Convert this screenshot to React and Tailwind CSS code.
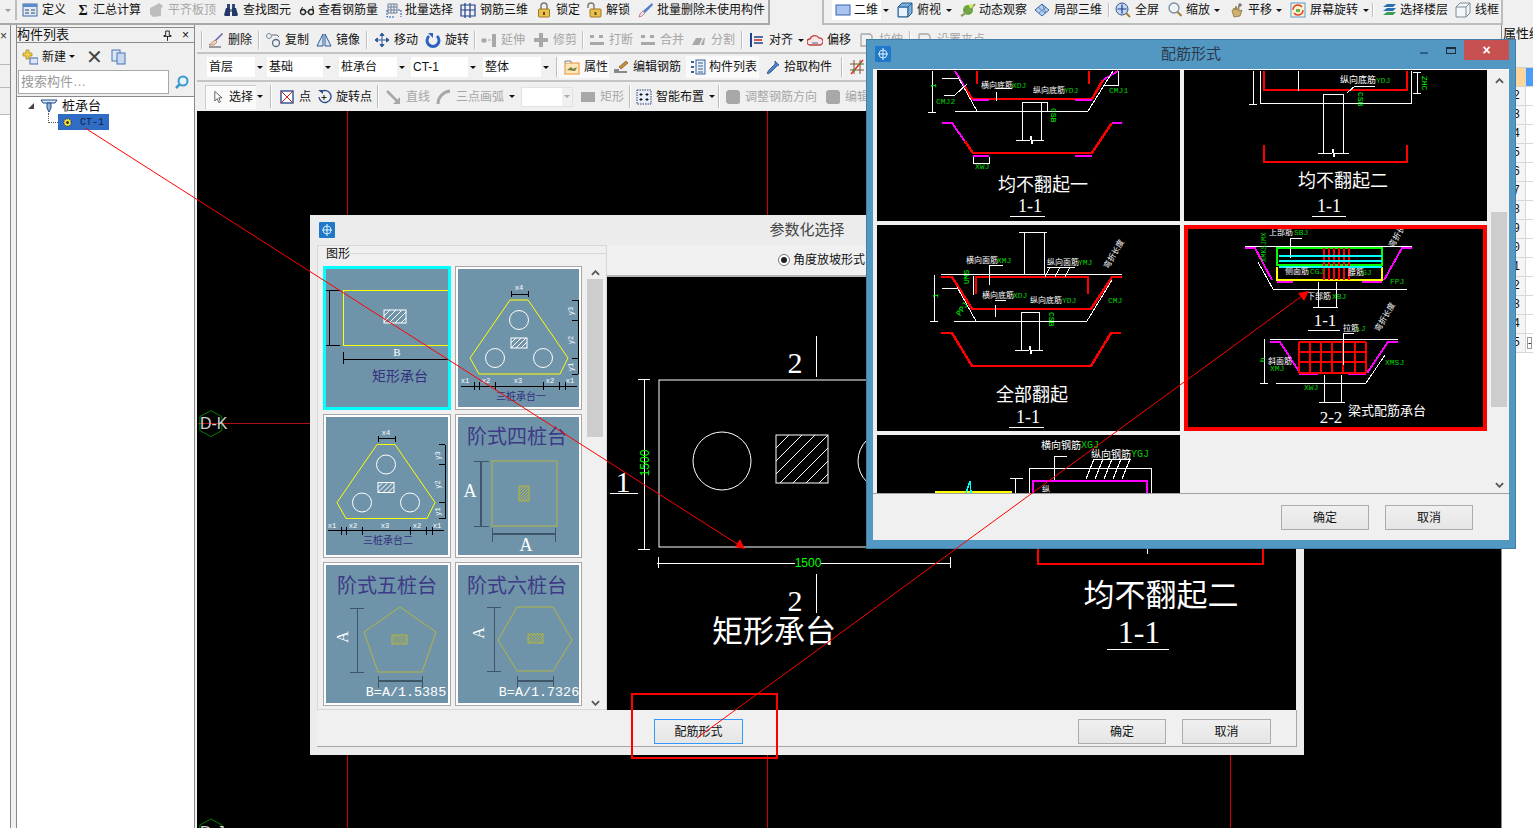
import React from "react";

// small 16px toolbar glyphs
const S = ({ children }) => (
  <svg viewBox="0 0 16 16" className="w-4 h-4 shrink-0">
    {children}
  </svg>
);

const icons = {
  define: (
    <S>
      <rect x="1" y="2" width="14" height="12" fill="#dfe9f7" stroke="#3d6aa8" />
      <rect x="1" y="2" width="14" height="3" fill="#5b8bc9" />
      <path d="M3 8h4M3 11h4M9 8h4M9 11h4" stroke="#345" />
    </S>
  ),
  greyBlob: (
    <S>
      <path d="M2 6l6-3 3-2 4 3-2 3v7l-8 1-3-3z" fill="#bdbdbd" />
    </S>
  ),
  binoculars: (
    <S>
      <path d="M4 2h3v5H4zM9 2h3v5H9z" fill="#2f4a80" />
      <path d="M1 13l2-7h4v8H2zM15 13l-2-7H9v8h5z" fill="#24386a" />
      <path d="M7 7h2v3H7z" fill="#789" />
    </S>
  ),
  glasses: (
    <S>
      <circle cx="4" cy="10" r="2.5" fill="none" stroke="#222" strokeWidth="1.3" />
      <circle cx="12" cy="10" r="2.5" fill="none" stroke="#222" strokeWidth="1.3" />
      <path d="M6.5 10h3M1.5 9l2-4M14.5 9l-1-5" stroke="#222" />
    </S>
  ),
  batch: (
    <S>
      <path d="M2 2h9v9H2zM2 5h9M2 8h9M5 2v9M8 2v9" fill="none" stroke="#6f7f99" />
      <path d="M1 8v7h8M12 8h3v7" fill="none" stroke="#1f54c0" strokeDasharray="2 1" />
    </S>
  ),
  rebar3d: (
    <S>
      <path d="M1 3h14v11H1zM5 1v15M10 1v15M1 8h14" fill="none" stroke="#1d3f8c" strokeWidth="1.2" />
    </S>
  ),
  lock: (
    <S>
      <path d="M5 7V4a3 3 0 016 0v3" fill="none" stroke="#777" strokeWidth="1.4" />
      <rect x="2.5" y="7" width="11" height="8" rx="1" fill="#e8c050" stroke="#a07820" />
      <rect x="7" y="10" width="2" height="3" fill="#6b4a10" />
    </S>
  ),
  unlock: (
    <S>
      <path d="M2 6V4a3 3 0 016 0v3" fill="none" stroke="#777" strokeWidth="1.4" />
      <rect x="4" y="7" width="11" height="8" rx="1" fill="#e8c050" stroke="#a07820" />
      <rect x="8.5" y="10" width="2" height="3" fill="#6b4a10" />
    </S>
  ),
  brush: (
    <S>
      <path d="M14 1l1 2-8 8-2-2z" fill="#4d7fd0" />
      <path d="M5 9l2 2-3 3-3 1 1-3z" fill="#e6e6f5" stroke="#c05050" strokeWidth=".7" />
    </S>
  ),
  view2d: (
    <S>
      <rect x="1" y="3" width="14" height="10" fill="#a9c4ee" stroke="#3564b0" />
    </S>
  ),
  cube: (
    <S>
      <path d="M1 5l4-4h10v10l-4 4H1z" fill="#7fb0dc" stroke="#245a8c" />
      <path d="M1 5h10v10M11 5l4-4" fill="none" stroke="#245a8c" />
      <rect x="2" y="6" width="8" height="8" fill="#e9f2fa" />
    </S>
  ),
  orbit: (
    <S>
      <circle cx="8" cy="8" r="5" fill="#66a83c" />
      <path d="M1 14C5 12 12 6 15 2" stroke="#8a9a60" strokeWidth="2" fill="none" />
      <circle cx="11" cy="4" r="2" fill="#d5e860" />
    </S>
  ),
  local3d: (
    <S>
      <path d="M1 8l7-6 7 6-7 6z" fill="#b8cfee" stroke="#3a68a8" />
      <path d="M4 5l7 6M8 2l4 9M12 5l-7 6" stroke="#3a68a8" strokeWidth=".7" />
    </S>
  ),
  full: (
    <S>
      <circle cx="7" cy="7" r="6" fill="#c6d8f4" stroke="#34548c" />
      <path d="M7 2.5v9M2.5 7h9" stroke="#1b3f8a" strokeWidth="1.2" />
      <path d="M11 11l4 4" stroke="#a08030" strokeWidth="2" />
    </S>
  ),
  zoom: (
    <S>
      <circle cx="7" cy="6" r="5" fill="#eef3f8" stroke="#7d8da0" strokeWidth="1.3" />
      <path d="M10.5 10l4 4" stroke="#a08030" strokeWidth="2" />
    </S>
  ),
  hand: (
    <S>
      <path d="M3 9l2-3 1 2 1-4 1 4 2-4v5l3-1-2 6-6 1z" fill="#d0b070" stroke="#7c6530" strokeWidth=".7" />
      <path d="M11 1v4M9 3h4" stroke="#555" />
    </S>
  ),
  screenRotate: (
    <S>
      <rect x="1" y="1" width="14" height="14" fill="#fbf3d0" stroke="#5a9ad0" />
      <path d="M3 8a5 5 0 019-3M13 8a5 5 0 01-9 3" fill="none" stroke="#e0402a" strokeWidth="1.4" />
      <rect x="6" y="7" width="4" height="3" fill="#70b050" />
    </S>
  ),
  layers: (
    <S>
      <path d="M2 5l4-3h9l-3 3zM2 9l4-3h9l-3 3z" fill="#2a70b0" />
      <path d="M2 13l4-3h9l-3 3z" fill="#3e9a50" />
    </S>
  ),
  wire: (
    <S>
      <path d="M1 5l4-4h10v10l-4 4H1zM1 5h10v10M11 5l4-4" fill="#f4f6f8" stroke="#7d8a96" />
    </S>
  ),
  erase: (
    <S>
      <path d="M14 1l1 1-7 7-1-1z" fill="#6b58a8" />
      <path d="M7 8l2 2-3 3H1z" fill="#f2d6c0" stroke="#a05040" strokeWidth=".6" />
      <path d="M1 15h12" stroke="#444" />
    </S>
  ),
  copy: (
    <S>
      <circle cx="4" cy="4" r="2.5" fill="none" stroke="#7a8ca0" />
      <circle cx="11" cy="11" r="3.5" fill="none" stroke="#5a6a80" strokeWidth="1.3" />
      <path d="M7 3h5l2 2" fill="none" stroke="#5a6a80" />
    </S>
  ),
  mirror: (
    <S>
      <path d="M7 2v12H1zM9 2v12h6z" fill="#dbe6f4" stroke="#2d5a98" />
    </S>
  ),
  move: (
    <S>
      <path d="M8 1v14M1 8h14M8 1L6 3.5h4zM8 15l-2-2.5h4zM1 8l2.5-2v4zM15 8l-2.5-2v4z" fill="#2d5a98" stroke="#2d5a98" />
    </S>
  ),
  rotate: (
    <S>
      <path d="M4 4a6 6 0 108 0" fill="none" stroke="#2d62c0" strokeWidth="3" />
      <path d="M3 1h5v5z" fill="#2d62c0" />
    </S>
  ),
  extend: (
    <S>
      <path d="M1 7h4v3H1zM7 8h3" stroke="#a8a8a8" fill="#a8a8a8" />
      <rect x="11" y="2" width="4" height="13" fill="#a8a8a8" />
    </S>
  ),
  trim: (
    <S>
      <path d="M6 1h4v5h5v4h-5v5H6v-5H1V6h5z" fill="#a8a8a8" />
    </S>
  ),
  split: (
    <S>
      <path d="M1 3h4v3H1zM10 3h4v3h-4zM1 10h14v3H1z" fill="#a8a8a8" />
    </S>
  ),
  cut: (
    <S>
      <path d="M1 13l4-7h9l-1 7z" fill="#a8a8a8" />
      <path d="M9 13l5-11" stroke="#f0f0f0" strokeWidth="1.5" />
    </S>
  ),
  align: (
    <S>
      <path d="M2 1v14" stroke="#1d3f8c" strokeWidth="2" />
      <path d="M5 5h9M5 11h9" stroke="#1d3f8c" strokeWidth="1.5" />
      <path d="M5 8h8" stroke="#d02020" strokeWidth="1.5" />
    </S>
  ),
  offset: (
    <S>
      <path d="M3 13a3 3 0 010-6 5 5 0 019-1 3.500 3.500 0 011 7z" fill="#f8e6e6" stroke="#c04040" strokeWidth="1.3" />
      <path d="M5 11h6" stroke="#4060a0" />
    </S>
  ),
  stretch: (
    <S>
      <path d="M2 2h9l2 2v3M2 2v12h5" fill="none" stroke="#a8a8a8" strokeWidth="1.3" />
    </S>
  ),
  prop: (
    <S>
      <rect x="1" y="4" width="14" height="11" fill="#fde6b8" stroke="#e89030" />
      <path d="M1 4V2h6v2" fill="#e9e9e9" stroke="#888" />
      <path d="M3 11l4-3 2 2 4-2-2 4z" fill="#708040" />
    </S>
  ),
  pencil: (
    <S>
      <path d="M13 2l2 2-7 6-2-2z" fill="#c89038" stroke="#704010" strokeWidth=".6" />
      <path d="M1 11h5M1 13h13" stroke="#222" />
    </S>
  ),
  list: (
    <S>
      <rect x="6" y="1" width="9" height="14" fill="#e8eef8" stroke="#3a6098" />
      <path d="M8 4h5M8 7h5M8 10h5M8 13h5" stroke="#3a6098" />
      <path d="M1 2h3v2H1zM1 7h3v2H1zM1 12h3v2H1z" fill="#3a6098" />
    </S>
  ),
  dropper: (
    <S>
      <path d="M10 2l4 4-2 1-6 6-3 2-1-1 2-3 6-6z" fill="#4e82c8" stroke="#20487c" strokeWidth=".7" />
    </S>
  ),
  snap: (
    <S>
      <path d="M1 5h14M1 11h14M5 1v14M11 1v14" stroke="#805030" />
      <path d="M2 15L14 1" stroke="#e02020" strokeWidth="1.3" />
      <circle cx="5" cy="11" r="1.2" fill="#30a030" />
      <circle cx="11" cy="5" r="1.2" fill="#30a030" />
    </S>
  ),
  point: (
    <S>
      <rect x="2" y="2" width="12" height="12" fill="#fff" stroke="#1d3f8c" strokeWidth="1.3" />
      <path d="M2 2l12 12M14 2L2 14" stroke="#d02020" />
    </S>
  ),
  rotatePoint: (
    <S>
      <path d="M5 3a6 6 0 11-2 5" fill="none" stroke="#2d4f8c" strokeWidth="1.4" />
      <path d="M2 1h5v4z" fill="#2d4f8c" />
      <path d="M8 6v5M5.500 8.500h5" stroke="#222" />
    </S>
  ),
  line: (
    <S>
      <path d="M1 2l11 11" stroke="#a8a8a8" strokeWidth="2.5" />
      <path d="M14 8v7H7z" fill="#a8a8a8" />
    </S>
  ),
  arc: (
    <S>
      <path d="M2 15C2 8 7 3 14 2" fill="none" stroke="#a8a8a8" strokeWidth="3" />
    </S>
  ),
  greyRect: (
    <S>
      <rect x="1" y="3" width="14" height="10" fill="#a8a8a8" />
    </S>
  ),
  smart: (
    <S>
      <rect x="1" y="1" width="14" height="14" fill="#e8eef8" stroke="#2a3f6c" strokeDasharray="1.500 1" />
      <path d="M5 4v3M3.500 5.500h3M11 4v3M9.500 5.500h3M5 9v3M3.500 10.500h3M11 9v3M9.500 10.500h3" stroke="#111" />
    </S>
  ),
  greySquare: (
    <S>
      <path d="M3 1h10l2 2v11l-2 1H3l-2-2V3z" fill="#a8a8a8" />
    </S>
  ),
};

const Arrow = ({ ml = "ml-[1px]" }) => <span className={`${ml} w-0 h-0 border-x-[3px] border-x-transparent border-t-[3px] border-t-[#111]`} />;

const Tool = ({ w, icon, label, grey, arrow, gap = "gap-1" }) => (
  <div className={`${w} h-full flex items-center shrink-0 whitespace-nowrap ${gap} ${grey ? "text-[#a6a6a6]" : "text-[#111]"}`}>
    {icon}
    <span>{label}</span>
    {arrow && <Arrow />}
  </div>
);

const Sep = ({ w }) => (
  <div className={`${w} h-full py-[3px] shrink-0`}>
    <div className="w-[2px] h-full bg-[#bdbdbd] border-r border-white" />
  </div>
);

const Combo = ({ w, text, mono, outline }) => (
  <div className={`${w} h-[20px] shrink-0 flex items-center justify-between bg-white ${outline ? "border border-[#e2e2e2]" : ""}`}>
    <span className={`pl-[2px] ${mono ? "font-['Liberation_Mono',monospace]" : ""}`}>{text}</span>
    <span className="w-[10px] h-full flex items-center justify-center bg-[#f0f0f0]">
      <span className={`w-0 h-0 border-x-[3px] border-x-transparent border-t-[3px] ${outline ? "border-t-[#aaa]" : "border-t-[#111]"}`} />
    </span>
  </div>
);

const TopBar = () => (
  <div className="h-[25px] flex shrink-0 text-[12px]">
    <div className="w-[770px] h-[25px] pb-[3px] flex border-r-2 border-b-2 border-[#a8a8a8] shrink-0">
      <div className="w-[15px] flex items-center justify-center">
        <span className="w-0 h-0 border-x-[3px] border-x-transparent border-t-[3px] border-t-[#999]" />
      </div>
      <div className="w-[7px] h-full border-l-2 border-[#bdbdbd]" />
      <Tool w="w-[53px]" icon={icons.define} label="定义" />
      <Tool w="w-[73px]" gap="gap-[2px]" icon={<span className="w-4 text-center font-bold text-[14px] font-['Liberation_Serif',serif]">Σ</span>} label="汇总计算" />
      <Tool w="w-[75px]" icon={icons.greyBlob} label="平齐板顶" grey />
      <Tool w="w-[76px]" icon={icons.binoculars} label="查找图元" />
      <Tool w="w-[87px]" gap="gap-[3px]" icon={icons.glasses} label="查看钢筋量" />
      <Tool w="w-[74px]" gap="gap-[3px]" icon={icons.batch} label="批量选择" />
      <Tool w="w-[76px]" icon={icons.rebar3d} label="钢筋三维" />
      <Tool w="w-[50px]" icon={icons.lock} label="锁定" />
      <Tool w="w-[52px]" icon={icons.unlock} label="解锁" />
      <Tool w="w-[130px]" gap="gap-[3px]" icon={icons.brush} label="批量删除未使用构件" />
    </div>
    <div className="w-[52px] shrink-0" />
    <div className="w-[681px] h-[25px] pb-[3px] flex border-l-2 border-r-2 border-b-2 border-[#bdbdbd] shrink-0">
      <div className="w-[8px] shrink-0" />
      <div className="w-[65px] h-full shrink-0">
        <div className="w-[59px] h-[20px] flex items-center justify-between bg-white pl-[3px]">
          <span className="flex items-center gap-[3px]">
            {icons.view2d}
            二维
          </span>
          <span className="w-[10px] h-full flex items-center justify-center bg-[#f0f0f0]">
            <span className="w-0 h-0 border-x-[3px] border-x-transparent border-t-[3px] border-t-[#111]" />
          </span>
        </div>
      </div>
      <Tool w="w-[63px]" icon={icons.cube} label="俯视" arrow />
      <Tool w="w-[74px]" gap="gap-[3px]" icon={icons.orbit} label="动态观察" />
      <Tool w="w-[74px]" icon={icons.local3d} label="局部三维" />
      <Sep w="w-[7px]" />
      <Tool w="w-[52px]" icon={icons.full} label="全屏" />
      <Tool w="w-[62px]" gap="gap-[3px]" icon={icons.zoom} label="缩放" arrow />
      <Tool w="w-[61px]" gap="gap-[3px]" icon={icons.hand} label="平移" arrow />
      <Tool w="w-[82px]" icon={icons.screenRotate} label="屏幕旋转" arrow />
      <Sep w="w-[9px]" />
      <Tool w="w-[74px]" gap="gap-[3px]" icon={icons.layers} label="选择楼层" />
      <Tool w="w-[46px]" icon={icons.wire} label="线框" />
    </div>
  </div>
);

const LeftStrip = () => (
  <div className="w-[17px] shrink-0 flex">
    <div className="w-[11px] flex flex-col border-r border-[#8a8a8a]">
      <div className="h-[17px] mt-[2px] flex items-center text-[12px] text-[#333]">×</div>
      <div className="h-[21px] border-b border-[#bbb]" />
      <div className="h-[23px] border-b border-[#bbb]" />
      <div className="h-[27px] border-b border-[#bbb]" />
      <div className="flex-1 bg-white" />
    </div>
    <div className="w-[6px] border-r border-[#8a8a8a] bg-[#f0f0f0]" />
  </div>
);

const LeftPanel = () => (
  <div className="w-[178px] shrink-0 flex flex-col border-r border-[#8a8a8a] text-[12px]">
    <div className="h-[16px] mt-[2px] flex items-center justify-between border-t border-b border-[#8a8a8a] pr-[5px]">
      <span className="text-[13px]">构件列表</span>
      <span className="flex items-center gap-[10px]">
        <svg viewBox="0 0 10 12" className="w-[9px] h-[11px]">
          <path d="M3 1h4v5h2v1H1V6h2zM5 7v5" fill="none" stroke="#111" />
        </svg>
        <span>×</span>
      </span>
    </div>
    <div className="h-[27px] flex items-center pl-[5px]">
      <svg viewBox="0 0 16 16" className="w-4 h-4">
        <path d="M4 1h3v3h3v3H7v3H4V7H1V4h3z" fill="#f0d040" stroke="#a08020" strokeWidth=".7" />
        <rect x="8" y="9" width="8" height="6" fill="#dde6f4" stroke="#4468a8" />
      </svg>
      <span className="ml-1">新建</span>
      <Arrow ml="ml-[3px]" />
      <span className="ml-[11px] text-[20px] leading-none text-[#444]">✕</span>
      <svg viewBox="0 0 16 16" className="w-4 h-4 ml-[8px]">
        <rect x="1" y="1" width="8" height="11" fill="#dde6f4" stroke="#4a72b8" />
        <rect x="6" y="4" width="8" height="11" fill="#c8d8f0" stroke="#4a72b8" />
      </svg>
    </div>
    <div className="h-[24px] flex">
      <div className="w-[151px] ml-[1px] border border-[#a8a8a8] bg-white text-[#999] flex items-center pl-[2px] text-[13px]">搜索构件…</div>
      <div className="flex-1 flex items-center justify-center">
        <svg viewBox="0 0 16 16" className="w-4 h-4">
          <circle cx="9" cy="7" r="4.500" fill="#e8f4fc" stroke="#3a9ad0" strokeWidth="2" />
          <path d="M6 10l-4 4" stroke="#3a9ad0" strokeWidth="2.500" />
        </svg>
      </div>
    </div>
    <div className="flex-1 bg-white mt-[2px] border-t border-[#8a8a8a]">
      <div className="h-[17px] flex items-center">
        <span className="ml-[11px] w-0 h-0 border-l-[6px] border-l-transparent border-b-[6px] border-b-[#444]" />
        <svg viewBox="0 0 18 16" className="w-[18px] h-4 ml-[6px]">
          <path d="M1 2h16l-2 3H3z" fill="#dde6f4" stroke="#1d4a90" />
          <path d="M7 5h4v5l-2 4-2-4z" fill="#9ab4d8" stroke="#1d4a90" />
        </svg>
        <span className="ml-[4px] text-[13px]">桩承台</span>
      </div>
      <div className="h-[16px] flex items-center">
        <div className="ml-[31px] w-[10px] h-[10px] -mt-[8px] border-l border-b border-dotted border-[#555]" />
        <div className="w-[51px] h-full bg-[#2f6cc4] flex items-center pl-[4px]">
          <svg viewBox="0 0 12 12" className="w-[11px] h-[11px]">
            <circle cx="6" cy="6" r="4" fill="#f0e040" stroke="#222" strokeDasharray="1.500 1" />
            <circle cx="6" cy="6" r="1.500" fill="#222" />
          </svg>
          <span className="ml-[7px] font-['Liberation_Mono',monospace] text-[10px] text-[#10204a]">CT-1</span>
        </div>
      </div>
    </div>
  </div>
);

const EditBars = () => (
  <div className="shrink-0 text-[12px]">
    <div className="h-[29px] pt-[3px] flex pl-[4px] border-b-2 border-[#c4c4c4]">
      <Sep w="w-[7px]" />
      <Tool w="w-[50px]" icon={icons.erase} label="删除" />
      <Sep w="w-[7px]" />
      <Tool w="w-[51px]" icon={icons.copy} label="复制" />
      <Tool w="w-[50px]" icon={icons.mirror} label="镜像" />
      <Sep w="w-[8px]" />
      <Tool w="w-[51px]" icon={icons.move} label="移动" />
      <Tool w="w-[49px]" icon={icons.rotate} label="旋转" />
      <Sep w="w-[7px]" />
      <Tool w="w-[52px]" icon={icons.extend} label="延伸" grey />
      <Tool w="w-[49px]" icon={icons.trim} label="修剪" grey />
      <Sep w="w-[7px]" />
      <Tool w="w-[51px]" icon={icons.split} label="打断" grey />
      <Tool w="w-[51px]" icon={icons.split} label="合并" grey />
      <Tool w="w-[50px]" icon={icons.cut} label="分割" grey />
      <Sep w="w-[8px]" />
      <Tool w="w-[58px]" icon={icons.align} label="对齐" arrow />
      <Tool w="w-[52px]" icon={icons.offset} label="偏移" />
      <Tool w="w-[50px]" icon={icons.stretch} label="拉伸" grey />
      <Sep w="w-[8px]" />
      <Tool w="w-[90px]" icon={icons.stretch} label="设置夹点" grey />
    </div>
    <div className="h-[28px] flex items-center pl-[10px] border-b-2 border-[#c4c4c4]">
      <Combo w="w-[58px]" text="首层" />
      <div className="w-[2px] shrink-0" />
      <Combo w="w-[66px]" text="基础" />
      <div className="w-[6px] shrink-0" />
      <Combo w="w-[68px]" text="桩承台" />
      <div className="w-[4px] shrink-0" />
      <Combo w="w-[67px]" text="CT-1" />
      <div className="w-[5px] shrink-0" />
      <Combo w="w-[68px]" text="整体" />
      <div className="w-[5px] shrink-0" />
      <Sep w="w-[3px]" />
      <div className="w-[50px] h-[22px] flex items-center gap-1 pl-[5px] bg-[#fafafa] shrink-0 whitespace-nowrap">
        {icons.prop}
        属性
      </div>
      <div className="w-[4px] shrink-0" />
      <Tool w="w-[73px]" icon={icons.pencil} label="编辑钢筋" />
      <div className="w-[73px] h-[22px] flex items-center gap-[3px] pl-[4px] bg-[#fafafa] shrink-0 whitespace-nowrap">
        {icons.list}
        构件列表
      </div>
      <div className="w-[6px] shrink-0" />
      <Tool w="w-[76px]" gap="gap-[3px]" icon={icons.dropper} label="拾取构件" />
      <Sep w="w-[8px]" />
      {icons.snap}
    </div>
    <div className="h-[29px] flex items-center pl-[8px]">
      <div className="w-[51px] h-[24px] flex items-center pl-[8px] gap-[7px] bg-[#fafafa] border-l border-t border-[#ccc] shrink-0 whitespace-nowrap">
        <svg viewBox="0 0 10 16" className="w-[8px] h-[14px]">
          <path d="M1 1v12l3-3 2 5 2-1-2-5h4z" fill="#fff" stroke="#444" />
        </svg>
        选择
      </div>
      <div className="w-[14px] h-full shrink-0 flex items-center">
        <Arrow ml="ml-[1px]" />
      </div>
      <Sep w="w-[9px]" />
      <Tool w="w-[37px]" icon={icons.point} label="点" />
      <Tool w="w-[61px]" icon={icons.rotatePoint} label="旋转点" />
      <Sep w="w-[9px]" />
      <Tool w="w-[50px]" icon={icons.line} label="直线" grey />
      <Tool w="w-[85px]" icon={icons.arc} label="三点画弧" grey arrow />
      <Combo w="w-[52px]" text="" outline />
      <div className="w-[7px] shrink-0" />
      <Tool w="w-[49px]" icon={icons.greyRect} label="矩形" grey />
      <Sep w="w-[7px]" />
      <Tool w="w-[82px]" icon={icons.smart} label="智能布置" arrow />
      <Sep w="w-[7px]" />
      <Tool w="w-[100px]" icon={icons.greySquare} label="调整钢筋方向" grey />
      <Tool w="w-[60px]" icon={icons.greySquare} label="编辑" grey />
    </div>
  </div>
);

// --- drawing helpers, authored in page coordinates through the viewBox ---
const L = ({ p, c = "#fff", w = 1 }) => <polyline points={p} fill="none" stroke={c} strokeWidth={w} shapeRendering="crispEdges" />;
const T = ({ x, y, s = 9, c = "#fff", a = "start", r, children, mono, serif }) => (
  <text
    x={x}
    y={y}
    fontSize={s}
    fill={c}
    textAnchor={a}
    dominantBaseline="central"
    fontFamily={mono ? "Liberation Mono, monospace" : serif ? "Liberation Serif, serif" : undefined}
    transform={r !== undefined ? `rotate(${r} ${x} ${y})` : undefined}
  >
    {children}
  </text>
);
const Leader = ({ x, y, name, code, w = 31, s = 8 }) => (
  <>
    <T x={x} y={y} s={s}>{name}</T>
    <T x={x + w} y={y} s={s} c="#00d000" mono>{code}</T>
  </>
);
const RED = "#ff0000";
const MAG = "#ff00ff";
const GRN = "#00ff00";

const hatch = (x1, y1, x2, y2, step, c = "#fff") => {
  const out = [];
  for (let x = x1 + step; x < x2 + (y2 - y1); x += step) {
    const sx = Math.min(x, x2);
    const sy = x > x2 ? y1 + (x - x2) : y1;
    const ex = Math.max(x - (y2 - y1), x1);
    const ey = x - (y2 - y1) < x1 ? y1 + (x - x1) : y2;
    out.push(<line key={x} x1={sx} y1={sy} x2={ex} y2={ey} stroke={c} strokeWidth="1" />);
  }
  return out;
};

const Cell1 = () => (
  <svg viewBox="877 70 303 151" className="w-[303px] h-[151px] block">
    <L p="955,71 972,99" c={MAG} w={2} />
    <L p="965,87 972,99 1092,99 1103,80" c={RED} w={2.5} />
    <L p="1103,80 1118,71" c={MAG} w={2} />
    <L p="977,71 977,84" c={RED} w={2} />
    <L p="1089,71 1089,84" c={RED} w={2} />
    <L p="973,100 989,100" c={MAG} w={2} />
    <L p="1075,100 1092,100" c={MAG} w={2} />
    <L p="955,111 1088,111 1113,71" />
    <L p="958,77 977,111" />
    <L p="932,71 932,112" />
    <L p="928,112 936,112" />
    <L p="942,78 958,78" />
    <L p="944,95 955,95 967,84" />
    <L p="1022,140 1022,102 1041,102 1041,140" />
    <L p="1016,140 1030,140 1031,136 1032,144 1033,140 1044,140" />
    <L p="996,92 996,101" />
    <L p="996,88 1012,88" />
    <L p="1040,102 1047,102 1047,111" />
    <L p="1104,85 1118,85 1118,71" />
    <T x={933} y={88} c={GRN} s={8} r={-90}>1</T>
    <Leader x={981} y={85} name="横向底筋" code="XDJ" />
    <Leader x={1033} y={90} name="纵向底筋" code="YDJ" />
    <T x={936} y={101} s={8} c="#00d000" mono>CMJ2</T>
    <T x={1109} y={90} s={8} c="#00d000" mono>CMJ1</T>
    <T x={1053} y={108} c={GRN} s={8} r={90} mono>CSB</T>
    <L p="942,123 952,123 973,153" c={MAG} w={2} />
    <L p="965,141 973,153 1092,153 1112,123" c={RED} w={2.5} />
    <L p="1112,123 1122,123" c={MAG} w={2} />
    <L p="973,156 989,156" c={MAG} w={2} />
    <L p="1075,156 1092,156" c={MAG} w={2} />
    <L p="973,157 973,163 989,163 989,157" />
    <T x={975} y={166} s={8} c="#00d000" mono>XWJ</T>
    <T x={1043} y={185} s={18} a="middle">均不翻起一</T>
    <T x={1030} y={206} s={18} a="middle" serif>1-1</T>
    <L p="1010,216 1045,216" />
  </svg>
);

const Cell2 = () => (
  <svg viewBox="1184 70 303 151" className="w-[303px] h-[151px] block">
    <L p="1264,71 1264,90 1407,90 1407,71" c={RED} w={2.5} />
    <L p="1260,71 1260,103 1411,103 1411,71" />
    <L p="1298,71 1298,91" />
    <L p="1323,153 1323,94 1343,94 1343,153" />
    <L p="1318,153 1332,153 1333,149 1334,157 1335,153 1349,153" />
    <L p="1253,71 1253,104" />
    <L p="1249,104 1257,104" />
    <L p="1417,72 1417,93" />
    <L p="1413,72 1421,72" />
    <L p="1413,93 1421,93" />
    <T x={1340} y={80} s={9}>纵向底筋</T>
    <T x={1376} y={80} s={8} c="#00d000" mono>YDJ</T>
    <L p="1347,93 1355,86 1375,86" />
    <T x={1424} y={76} c={GRN} s={8} r={90} mono>ZHC</T>
    <T x={1360} y={92} c={GRN} s={8} r={90} mono>CSB</T>
    <L p="1264,145 1264,162 1407,162 1407,145" c={RED} w={2} />
    <T x={1343} y={181} s={18} a="middle">均不翻起二</T>
    <T x={1329} y={206} s={18} a="middle" serif>1-1</T>
    <L p="1312,216 1346,216" />
  </svg>
);

const Cell3 = () => (
  <svg viewBox="877 225 303 206" className="w-[303px] h-[206px] block">
    <L p="1024,232 1024,274" />
    <L p="1044,232 1044,274" />
    <L p="1019,232 1047,232" />
    <L p="941,274 1122,274" />
    <L p="941,277 952,277 972,309 1091,309 1112,277 1122,277" c={RED} w={2.5} />
    <L p="976,294 976,277 1088,277 1088,294" c={RED} w={2.5} />
    <L p="954,321 1087,321 1112,280" />
    <L p="957,287 976,321" />
    <L p="1021,350 1021,312 1039,312 1039,350" />
    <L p="1015,350 1029,350 1030,346 1031,354 1032,350 1043,350" />
    <L p="941,333 952,333 972,366 1091,366 1111,333 1121,333" c={RED} w={2.5} />
    <L p="934,275 934,321" />
    <L p="930,321 938,321" />
    <L p="942,288 957,288" />
    <L p="973,276 973,295" />
    <L p="989,265 989,285" />
    <L p="989,265 1003,265" />
    <L p="995,305 995,317" />
    <L p="995,300 1006,300" />
    <T x={935} y={298} c={GRN} s={8} r={-90}>1</T>
    <Leader x={966} y={260} name="横向面筋" code="XMJ" />
    <Leader x={1047} y={262} name="纵向面筋" code="YMJ" />
    <Leader x={982} y={295} name="横向底筋" code="XDJ" />
    <Leader x={1030} y={300} name="纵向底筋" code="YDJ" w={32} />
    <L p="1047,267 1075,267" />
    <L p="1045,277 1050,267" />
    <L p="1055,277 1060,267" />
    <L p="1065,277 1070,267" />
    <T x={1108} y={300} s={8} c="#00d000" mono>CMJ</T>
    <T x={966} y={284} c={GRN} s={8} r={-90} mono>UMS</T>
    <T x={1051} y={312} c={GRN} s={8} r={90} mono>CSB</T>
    <T x={958} y={315} c={GRN} s={8} r={-55} mono>PPJ</T>
    <T x={1106} y={268} s={8} r={-60}>弯折长度</T>
    <T x={1032} y={395} s={18} a="middle">全部翻起</T>
    <T x={1028} y={417} s={18} a="middle" serif>1-1</T>
    <L p="1009,427 1044,427" />
  </svg>
);

const Cell4 = () => (
  <svg viewBox="1188 229 295 198" className="w-[295px] h-[198px] block">
    <L p="1245,246 1412,246" />
    <L p="1245,248 1255,248 1272,280" c={MAG} w={2} />
    <L p="1384,280 1402,248 1412,248" c={MAG} w={2} />
    <rect x="1277" y="248" width="105" height="17" fill="none" stroke="#00ff00" strokeWidth="2" />
    <L p="1277,267 1277,280 1382,280 1382,267" c="#ffff00" w={2} />
    {[1324, 1329, 1334, 1339, 1344, 1349].map((x) => <L key={x} p={`${x},248 ${x},280`} c={RED} w={1.5} />)}
    {[256, 261, 267].map((y) => <L key={y} p={`1279,${y} 1382,${y}`} c="#00ffff" w={2} />)}
    <L p="1277,282 1293,282" c={MAG} w={2} />
    <L p="1362,282 1382,282" c={MAG} w={2} />
    <L p="1273,289 1407,289" />
    <L p="1258,262 1273,289" />
    <L p="1318,282 1318,307" />
    <L p="1336,282 1336,307" />
    <L p="1313,307 1338,307" />
    <T x={1269} y={232} s={8}>上部筋</T>
    <T x={1294} y={232} c="#00d000" s={8} mono>SBJ</T>
    <L p="1290,258 1290,238 1302,238" />
    <T x={1285} y={271} s={8}>侧面筋</T>
    <T x={1310} y={271} c="#00d000" s={8} mono>CGJ</T>
    <T x={1348} y={272} s={8}>腰筋</T>
    <T x={1362} y={272} c="#00d000" s={8} mono>GJ</T>
    <T x={1307} y={296} s={8}>下部筋</T>
    <T x={1332} y={296} c="#00d000" s={8} mono>XBJ</T>
    <T x={1264} y={262} c="#00d000" s={7} r={-90} mono>XMKSJMX</T>
    <T x={1390} y={281} c="#00d000" s={8} mono>FPJ</T>
    <T x={1391} y={247} s={8} r={-60}>弯折长度</T>
    <T x={1325} y={320} s={17} a="middle" serif>1-1</T>
    <L p="1308,330 1340,330" />
    <L p="1270,339 1398,339" />
    <L p="1270,342 1280,342 1300,373" c={MAG} w={2} />
    <L p="1367,373 1388,342 1398,342" c={MAG} w={2} />
    <L p="1299,374 1318,374" c={MAG} w={2} />
    <L p="1348,374 1366,374" c={MAG} w={2} />
    {[1299, 1310, 1321, 1332, 1343, 1355, 1366].map((x) => <L key={x} p={`${x},342 ${x},373`} c={RED} w={2} />)}
    {[342, 352, 362, 373].map((y) => <L key={y} p={`1299,${y} 1366,${y}`} c={RED} w={2} />)}
    <L p="1264,339 1264,383" />
    <L p="1260,383 1268,383" />
    <L p="1276,383 1300,383 1366,383 1385,355" />
    <L p="1324,375 1324,402" />
    <L p="1341,375 1341,402" />
    <L p="1319,402 1345,402" />
    <T x={1268} y={361} s={8}>斜面筋</T>
    <T x={1270} y={368} c="#00d000" s={8} mono>XMJ</T>
    <T x={1343} y={328} s={8}>拉筋</T>
    <T x={1356} y={328} c="#00d000" s={8} mono>LJ</T>
    <L p="1343,365 1343,333 1354,333" />
    <T x={1304} y={387} c="#00d000" s={8} mono>XWJ</T>
    <T x={1385} y={362} c="#00d000" s={8} mono>XMSJ</T>
    <T x={1262} y={362} c={GRN} s={8} r={-90}>h</T>
    <T x={1377} y={331} s={8} r={-60}>弯折长度</T>
    <T x={1331} y={417} s={17} a="middle" serif>2-2</T>
    <L p="1315,427 1347,427" />
    <T x={1348} y={410} s={13}>梁式配筋承台</T>
  </svg>
);

const Cell5 = () => (
  <svg viewBox="877 435 303 58" className="w-[303px] h-[58px] block">
    <Leader x={1041} y={445} name="横向钢筋" code="XGJ" w={40} s={10} />
    <T x={1091} y={454} s={10}>纵向钢筋</T>
    <T x={1131} y={454} s={10} c="#00d000" mono>YGJ</T>
    <L p="1054,482 1054,456 1067,456" />
    <L p="1093,459 1131,459" />
    <L p="1086,479 1094,459" />
    <L p="1095,479 1103,459" />
    <L p="1104,479 1112,459" />
    <L p="1113,479 1121,459" />
    <L p="1122,479 1130,459" />
    <L p="1015,478 1015,493" />
    <L p="1010,478 1023,478" />
    <L p="1029,493 1029,468 1151,468 1151,493" />
    <L p="1033,493 1033,481 1147,481 1147,493" c={MAG} w={2.5} />
    <L p="935,492 1012,492" c="#ffff00" w={3} />
    <L p="966,493 970,481 971,493" c="#00ffff" w={1.5} />
    <T x={1042} y={489} s={8}>纵</T>
  </svg>
);

const Thumb = ({ vb, sel, children }) => (
  <div className={`w-full h-[144px] bg-white ${sel ? "border-[3px] border-[#00ffff]" : "border border-[#a8a8a8] p-[2px]"}`}>
    <svg viewBox={vb} className="w-full h-full block bg-[#6f94aa]">
      {children}
    </svg>
  </div>
);

const Y = "#ffff00";
const OL = "#b4b440";
const NAVY = "#33307c";

const ThreePile = ({ dx = 0, dy = 0, title }) => (
  <g transform={`translate(${dx} ${dy})`}>
    <polygon points="510,300 528,300 568,358 560,374 479,374 470,358" fill="none" stroke={Y} />
    <circle cx="519" cy="320" r="9.500" fill="none" stroke="#fff" />
    <circle cx="495" cy="358" r="9.500" fill="none" stroke="#fff" />
    <circle cx="543" cy="358" r="9.500" fill="none" stroke="#fff" />
    <rect x="511" y="338" width="16" height="10" fill="none" stroke="#fff" />
    {hatch(511, 338, 527, 348, 5)}
    <L p="511,291 511,297" c="#000" />
    <L p="528,291 528,297" c="#000" />
    <L p="511,294 528,294" c="#000" />
    <T x={519} y={288} s={7} a="middle" mono>x4</T>
    <L p="578,300 578,374" c="#000" />
    <L p="572,300 578,300" c="#000" />
    <L p="572,320 578,320" c="#000" />
    <L p="572,358 578,358" c="#000" />
    <L p="572,374 578,374" c="#000" />
    <T x={571} y={311} s={7} a="middle" r={-90} mono>y3</T>
    <T x={571} y={340} s={7} a="middle" r={-90} mono>y2</T>
    <T x={571} y={367} s={7} a="middle" r={-90} mono>y1</T>
    <L p="461,386 577,386" c="#000" />
    {[474, 479, 495, 543, 559, 565].map((x) => <L key={x} p={`${x},382 ${x},390`} c="#000" />)}
    {[[465, "x1"], [486, "x2"], [518, "x3"], [550, "x2"], [570, "x1"]].map(([x, t], i) => (
      <T key={i} x={x} y={381} s={7} a="middle" mono>{t}</T>
    ))}
    <T x={521} y={396} s={10} c={NAVY} a="middle">{title}</T>
  </g>
);

const PileList = () => (
  <div className="grid grid-cols-[128px_127px] gap-[4px] content-start h-[444px] overflow-hidden">
    <Thumb vb="326 269 122 138" sel>
      <L p="448,290 343,290 343,345 448,345" c={Y} />
      <rect x="384" y="310" width="22" height="13" fill="none" stroke="#fff" />
      {hatch(384, 310, 406, 323, 6)}
      <L p="329,290 329,345" c="#000" />
      <L p="326,290 340,290" c="#000" />
      <L p="326,345 340,345" c="#000" />
      <L p="343,359 449,359" c="#000" />
      <L p="343,352 343,364" c="#000" />
      <T x={397} y={352} s={11} a="middle" serif>B</T>
      <T x={400} y={376} s={14} c={NAVY} a="middle">矩形承台</T>
    </Thumb>
    <Thumb vb="458 269 121 138">
      <ThreePile title="三桩承台一" />
    </Thumb>
    <Thumb vb="326 417 122 138">
      <ThreePile dx={-133} dy={144.5} title="三桩承台二" />
    </Thumb>
    <Thumb vb="458 417 121 138">
      <T x={517} y={437} s={20} c="#3d3a86" a="middle">阶式四桩台</T>
      <rect x="492" y="461" width="65" height="65" fill="none" stroke={OL} />
      <rect x="519" y="486" width="10" height="15" fill="none" stroke={OL} />
      {hatch(519, 486, 529, 501, 3, OL)}
      <L p="481,461 481,526" c="#3f5568" w={2} />
      <L p="474,461 489,461" c="#3f5568" />
      <L p="474,526 489,526" c="#3f5568" />
      <L p="492,534 555,534" c="#3f5568" w={2} />
      <L p="492,528 492,542" c="#3f5568" />
      <L p="555,528 555,542" c="#3f5568" />
      <T x={470} y={491} s={18} a="middle" serif>A</T>
      <T x={526} y={545} s={18} a="middle" serif>A</T>
    </Thumb>
    <Thumb vb="326 565 122 138">
      <T x={387} y={586} s={20} c="#3d3a86" a="middle">阶式五桩台</T>
      <polygon points="400,607 436,632 422,672 378,672 364,632" fill="none" stroke={OL} />
      <rect x="392" y="635" width="15" height="9" fill="none" stroke={OL} />
      {hatch(392, 635, 407, 644, 3, OL)}
      <L p="357,608 357,672" c="#3f5568" />
      <L p="350,608 364,608" c="#3f5568" />
      <L p="350,672 364,672" c="#3f5568" />
      <L p="378,681 422,681" c="#3f5568" w={1.5} />
      <L p="378,676 378,688" c="#3f5568" />
      <L p="422,676 422,688" c="#3f5568" />
      <T x={342} y={637} s={16} a="middle" r={-90} serif>A</T>
      <T x={406} y={692} s={13.400} a="middle" mono>B=A/1.5385</T>
    </Thumb>
    <Thumb vb="458 565 121 138">
      <T x={517} y={586} s={20} c="#3d3a86" a="middle">阶式六桩台</T>
      <polygon points="498,640 517,607 553,607 572,640 553,671 517,671" fill="none" stroke={OL} />
      <rect x="528" y="634" width="15" height="9" fill="none" stroke={OL} />
      {hatch(528, 634, 543, 643, 3, OL)}
      <L p="494,607 494,671" c="#3f5568" />
      <L p="487,607 501,607" c="#3f5568" />
      <L p="487,671 501,671" c="#3f5568" />
      <L p="517,681 553,681" c="#3f5568" w={1.5} />
      <L p="517,676 517,688" c="#3f5568" />
      <L p="553,676 553,688" c="#3f5568" />
      <T x={478} y={633} s={16} a="middle" r={-90} serif>A</T>
      <T x={539} y={692} s={13.400} a="middle" mono>B=A/1.7326</T>
    </Thumb>
    <div className="h-[8px] border border-[#c8c8c8] bg-white" />
    <div className="h-[8px] border border-[#c8c8c8] bg-white" />
  </div>
);

const Chevron = ({ down }) => (
  <svg viewBox="0 0 10 6" className="w-[9px] h-[6px]">
    <path d={down ? "M1 1l4 4 4-4" : "M1 5l4-4 4 4"} fill="none" stroke="#555" strokeWidth="2" />
  </svg>
);

const WinButton = ({ w = "w-[88px]", active, children }) => (
  <div className={`${w} h-[25px] shrink-0 flex items-center justify-center border ${active ? "border-[#3399ff]" : "border-[#acacac]"} bg-gradient-to-b from-[#f0f0f0] to-[#e5e5e5] text-[12px] text-[#111]`}>
    {children}
  </div>
);

const AppIcon = () => (
  <svg viewBox="0 0 16 16" className="w-4 h-4 shrink-0">
    <rect width="16" height="16" rx="1" fill="#1f78c8" />
    <circle cx="8" cy="8" r="4" fill="none" stroke="#cfe6f8" />
    <path d="M8 2v12M3 8h10" stroke="#e8f4ff" />
  </svg>
);

const ParamDialog = () => (
  <div className="absolute left-[310px] top-[215px] w-[994px] h-[540px] bg-[#ececec] flex flex-col text-[12px]">
    <div className="h-[30px] shrink-0 relative flex items-center justify-center text-[#444] text-[15px]">
      <div className="absolute left-[9px] top-[7px]">
        <AppIcon />
      </div>
      参数化选择
    </div>
    <div className="h-[465px] ml-[7px] flex shrink-0">
      <div className="w-[290px] shrink-0 bg-[#f0f0f0] border border-[#d8d8d8] flex flex-col">
        <div className="h-[20px] shrink-0 pl-[8px] flex items-start leading-[17px]">
          <span>图形</span>
          <span className="flex-1 mt-[7px] border-t border-[#d8d8d8]" />
        </div>
        <div className="flex pl-[5px]">
          <div className="w-[259px] shrink-0">
            <PileList />
          </div>
          <div className="w-[16px] ml-[5px] flex flex-col items-center">
            <div className="h-[13px] flex items-center">
              <Chevron />
            </div>
            <div className="w-full h-[158px] bg-[#cdcdcd]" />
            <div className="flex-1" />
            <div className="h-[14px] flex items-center">
              <Chevron down />
            </div>
          </div>
        </div>
      </div>
      <div className="w-[689px] shrink-0 flex flex-col">
        <div className="h-[32px] shrink-0 flex items-center justify-start pl-[171px] gap-[3px] bg-[#f0f0f0] border-b-2 border-[#b5b5b5] whitespace-nowrap">
          <span className="w-[12px] h-[12px] rounded-full border border-[#777] bg-white flex items-center justify-center">
            <span className="w-[6px] h-[6px] rounded-full bg-[#222]" />
          </span>
          角度放坡形式
        </div>
        <svg viewBox="607 277 689 433" className="w-[689px] h-[433px] block bg-black">
          <rect x="659" y="380" width="240" height="167" fill="none" stroke="#fff" />
          <circle cx="722" cy="461" r="29" fill="none" stroke="#fff" />
          <circle cx="887" cy="461" r="29" fill="none" stroke="#fff" />
          <rect x="776" y="435" width="52" height="48" fill="none" stroke="#fff" />
          {hatch(776, 435, 828, 483, 13)}
          <L p="644,379 644,549" />
          <L p="638,379 650,379" />
          <L p="638,549 650,549" />
          <L p="657,563 795,563" />
          <L p="821,563 951,563" />
          <L p="658,557 658,568" />
          <L p="950,557 950,568" />
          <T x={645} y={463} s={12} c={GRN} a="middle" r={-90}>1500</T>
          <T x={808} y={563} s={12} c={GRN} a="middle">1500</T>
          <T x={795} y={362} s={30} a="middle" serif>2</T>
          <L p="816,336 816,377" />
          <T x={795} y={600} s={30} a="middle" serif>2</T>
          <L p="816,574 816,613" />
          <T x={623} y={481} s={30} a="middle" serif>1</T>
          <L p="610,493 638,493" />
          <T x={774} y={631} s={31} a="middle">矩形承台</T>
          <L p="1038,540 1038,564 1263,564 1263,540" c={RED} w={2} />
          <L p="1148,548 1147,554" />
          <T x={1161} y={595} s={31} a="middle">均不翻起二</T>
          <T x={1139} y={632} s={32} a="middle" serif>1-1</T>
          <L p="1107,649 1169,649" />
        </svg>
      </div>
    </div>
    <div className="h-[37px] ml-[7px] w-[980px] shrink-0 flex items-start pt-[9px] border-b border-r border-[#a8a8a8] bg-[#f0f0f0]">
      <div className="ml-[337px]">
        <WinButton w="w-[89px]" active>配筋形式</WinButton>
      </div>
      <div className="ml-[335px]">
        <WinButton>确定</WinButton>
      </div>
      <div className="ml-[16px]">
        <WinButton w="w-[89px]">取消</WinButton>
      </div>
    </div>
  </div>
);

const RebarWindow = () => (
  <div className="absolute left-[866px] top-[39px] w-[650px] h-[510px] bg-[#5298c2] flex flex-col text-[12px] border border-[#3f7fa8]">
    <div className="h-[29px] shrink-0 relative flex items-center justify-center text-[15px] text-[#2c3a4c]">
      <div className="absolute left-[8px] top-[6px]">
        <AppIcon />
      </div>
      配筋形式
      <div className="absolute right-[6px] top-0 flex items-start">
        <div className="w-[8px] h-[2px] bg-[#2f5f82] mt-[12px] mr-[18px]" />
        <div className="w-[10px] h-[7px] border border-t-2 border-[#1c2c3c] mt-[7px] mr-[8px]" />
        <div className="w-[45px] h-[20px] bg-[#c75050] flex items-center justify-center text-white text-[14px] font-bold">×</div>
      </div>
    </div>
    <div className="mx-[6px] h-[471px] shrink-0 bg-[#f0f0f0] flex flex-col border-t border-white">
      <div className="h-[423px] shrink-0 flex pl-[4px]">
        <div className="w-[610px] shrink-0 grid grid-cols-[303px_303px] grid-rows-[151px_206px_58px] gap-[4px]">
          <div className="bg-black overflow-hidden">
            <Cell1 />
          </div>
          <div className="bg-black overflow-hidden">
            <Cell2 />
          </div>
          <div className="bg-black overflow-hidden">
            <Cell3 />
          </div>
          <div className="bg-black overflow-hidden border-4 border-[#ff0000]">
            <Cell4 />
          </div>
          <div className="bg-black overflow-hidden">
            <Cell5 />
          </div>
        </div>
        <div className="w-[16px] ml-[4px] flex flex-col items-center">
          <div className="h-[142px] pt-[8px]">
            <Chevron />
          </div>
          <div className="w-full h-[195px] bg-[#cdcdcd]" />
          <div className="flex-1 flex items-end pb-[5px]">
            <Chevron down />
          </div>
        </div>
      </div>
      <div className="flex-1 border-t border-[#a0a0a0] flex justify-end gap-[16px] pt-[11px] pr-[36px]">
        <WinButton>确定</WinButton>
        <WinButton>取消</WinButton>
      </div>
    </div>
  </div>
);

const rowNums = [1, 2, 3, 4, 5, 6, 7, 8, 9, 10, 11, 12, 13, 14, 15];

const RightPanel = () => (
  <div className="w-[32px] shrink-0 flex flex-col border-l border-[#8a8a8a] bg-white overflow-hidden text-[12px]">
    <div className="h-[21px] shrink-0 bg-[#f0f0f0] pt-[1px] pl-[1px] whitespace-nowrap text-[13px] leading-[16px]">属性编辑</div>
    <div className="h-[22px] shrink-0 bg-[#f0f0f0] border-b border-[#d0d0d0]" />
    {rowNums.map((n) => (
      <div key={n} className="h-[19px] shrink-0 flex border-b border-[#d8d8d8]">
        <div className={`w-[24px] shrink-0 pr-[5px] text-right font-['Liberation_Mono',monospace] text-[12px] leading-[18px] border-r border-[#d8d8d8] ${n === 1 ? "bg-[#ffd699]" : "bg-[#f5f5f5]"}`}>{n === 1 ? "" : n}</div>
        <div className={`flex-1 ${n === 1 ? "bg-[#4d9cf8]" : ""}`}>
          {n === 15 && <div className="w-[5px] h-[12px] mt-[3px] ml-[1px] border border-[#999] text-[10px] leading-[10px] text-center">-</div>}
        </div>
      </div>
    ))}
  </div>
);

const Canvas = () => (
  <div className="flex-1 relative bg-black overflow-hidden">
    <svg viewBox="197 110 1304 718" className="absolute inset-0 w-full h-full">
      <L p="347,110 347,828" c="#d00000" />
      <L p="767,110 767,828" c="#d00000" />
      <L p="1231,110 1231,828" c="#d00000" />
      <L p="197,423 320,423" c="#b01010" />
      <polygon points="210,410 221,416 221,430 210,436 199,430 199,416" fill="none" stroke="#008000" />
      <polygon points="210,819 221,825 221,839 210,845 199,839 199,825" fill="none" stroke="#008000" />
      <T x={199} y={423} s={16} c="#d0d0d0">D-K</T>
      <T x={199} y={833} s={16} c="#d0d0d0">D-J</T>
    </svg>
  </div>
);

export default function App() {
  return (
    <div className="relative w-[1533px] h-[828px] overflow-hidden bg-[#f0f0f0] text-[#111] text-[12px] font-['Liberation_Sans','Noto_Sans_CJK_SC',sans-serif]">
      <div className="flex flex-col h-full">
        <TopBar />
        <div className="flex flex-1 min-h-0">
          <LeftStrip />
          <LeftPanel />
          <div className="w-[2px] shrink-0" />
          <div className="w-[1304px] shrink-0 flex flex-col">
            <EditBars />
            <Canvas />
          </div>
          <RightPanel />
        </div>
      </div>

      <ParamDialog />
      <RebarWindow />

      {/* red markup drawn on top of the screenshot */}
      <svg viewBox="0 0 1533 828" className="absolute inset-0 w-[1533px] h-[828px] pointer-events-none">
        <line x1="85" y1="128" x2="742" y2="547" stroke="#ff0000" />
        <polygon points="745,549 735,547 740,539" fill="#ff0000" />
        <line x1="697" y1="738" x2="1306" y2="293" stroke="#ff0000" />
        <polygon points="1309,291 1304,301 1298,293" fill="#ff0000" />
        <rect x="632" y="694" width="145" height="64" fill="none" stroke="#ff0000" strokeWidth="2" />
      </svg>
    </div>
  );
}
